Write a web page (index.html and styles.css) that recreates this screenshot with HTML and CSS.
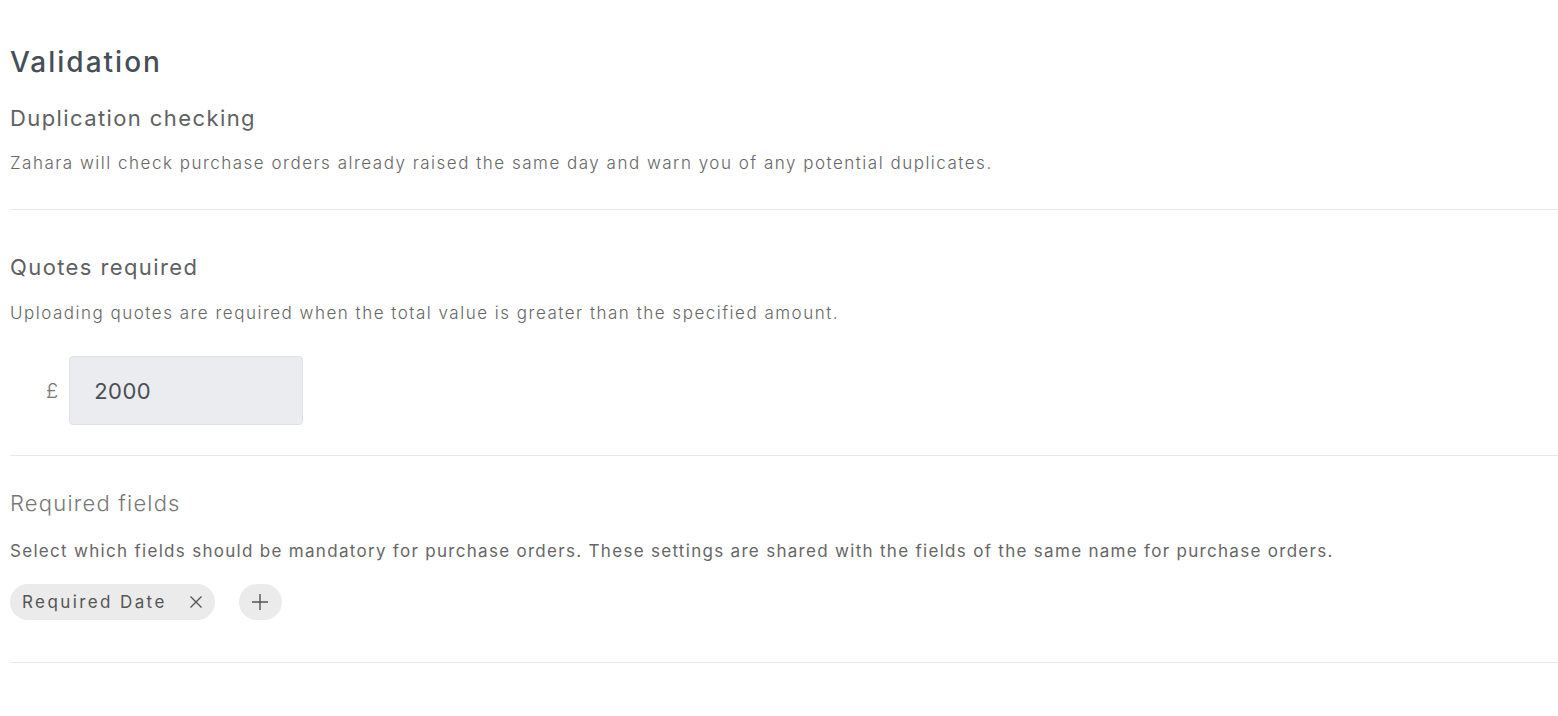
FILE: index.html
```html
<!DOCTYPE html>
<html>
<head>
<meta charset="utf-8">
<link rel="stylesheet" href="styles.css">
</head>
<body>
<main class="page">
  <h1 class="title">Validation</h1>
  <section class="section section-first">
    <h2 class="sec-title">Duplication checking</h2>
    <p class="sec-desc">Zahara will check purchase orders already raised the same day and warn you of any potential duplicates.</p>
  </section>
  <section class="section section-quotes">
    <h2 class="sec-title">Quotes required</h2>
    <p class="sec-desc">Uploading quotes are required when the total value is greater than the specified amount.</p>
    <div class="amount-row">
      <span class="currency">£</span>
      <div class="amount-input">2000</div>
    </div>
  </section>
  <section class="section section-fields">
    <h2 class="sec-title light">Required fields</h2>
    <p class="sec-desc regular">Select which fields should be mandatory for purchase orders. These settings are shared with the fields of the same name for purchase orders.</p>
    <div class="chips">
      <span class="chip"><span class="chip-label">Required Date</span>
        <svg class="chip-x" width="14" height="14" viewBox="0 0 14 14"><path d="M1.5 1.5L12.5 12.5M12.5 1.5L1.5 12.5" stroke="#555" stroke-width="1.4" fill="none"/></svg>
      </span>
      <span class="chip-add">
        <svg width="18" height="18" viewBox="0 0 18 18"><path d="M9 1V17M1 9H17" stroke="#555" stroke-width="1.4" fill="none"/></svg>
      </span>
    </div>
  </section>
</main>
</body>
</html>
```
FILE: styles.css
```css
html, body {
  margin: 0;
  padding: 0;
  background: #ffffff;
}
body {
  font-family: Inter, "Open Sans", sans-serif;
  color: #666666;
}
.page {
  padding: 44px 0 0 10px;
}
.title {
  margin: 0;
  font-size: 28px;
  line-height: 36px;
  font-weight: 500;
  letter-spacing: 2px;
  color: #454f58;
}
.section {
  border-bottom: 1px solid #e9e9ec;
}
.section-first {
  padding: 23px 0 33px;
}
.section-quotes {
  padding: 42px 0 30px;
}
.section-fields {
  padding: 32px 0 42px;
}
.sec-title {
  margin: 0;
  font-size: 22px;
  line-height: 30px;
  font-weight: 400;
  letter-spacing: 1.4px;
  color: #5f6163;
}
.sec-title.light {
  color: #777777;
  font-weight: 300;
  letter-spacing: 1.2px;
}
.sec-desc {
  margin: 17px 0 0;
  font-size: 17px;
  line-height: 26px;
  font-weight: 300;
  letter-spacing: 1.5px;
  color: #666666;
}
.sec-desc.regular {
  font-weight: 400;
  margin-top: 20px;
  letter-spacing: 1.3px;
}
.section-quotes .sec-desc {
  margin-top: 18px;
}
.amount-row {
  display: flex;
  align-items: center;
  margin-top: 30px;
  padding-left: 36px;
  gap: 11px;
}
.currency {
  font-size: 20px;
  font-weight: 300;
  color: #777777;
}
.amount-input {
  width: 208px;
  height: 67px;
  padding-left: 24px;
  box-sizing: content-box;
  display: flex;
  align-items: center;
  background: #ebecf0;
  border: 1px solid #e0e1e5;
  border-radius: 4px;
  font-size: 22px;
  letter-spacing: 0.5px;
  color: #4a4f55;
}
.chips {
  display: flex;
  align-items: center;
  gap: 24px;
  margin-top: 20px;
}
.chip {
  display: inline-flex;
  align-items: center;
  height: 36px;
  padding: 0 12px 0 12px;
  border-radius: 18px;
  background: #ebebeb;
  font-size: 17px;
  color: #555555;
}
.chip-label {
  letter-spacing: 2.4px;
}
.chip-x {
  margin-left: 22px;
}
.chip-add {
  display: inline-flex;
  align-items: center;
  justify-content: center;
  width: 43px;
  height: 36px;
  border-radius: 18px;
  background: #ebebeb;
}
```
